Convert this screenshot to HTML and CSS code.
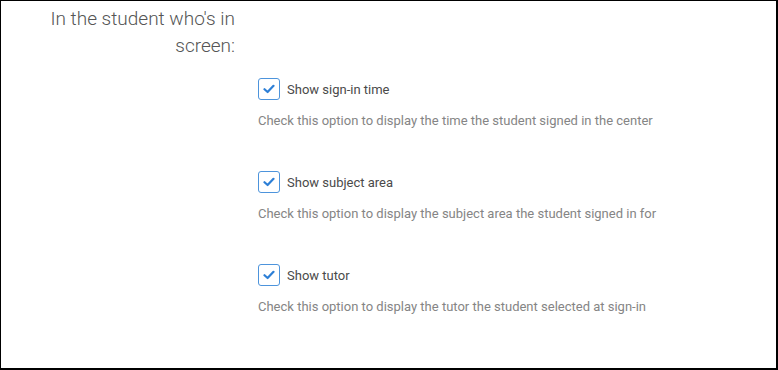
FILE: index.html
```html
<!DOCTYPE html>
<html lang="en">
<head>
    <meta charset="UTF-8">
    <title>Student display settings</title>
    <link rel="stylesheet" href="styles.css">
</head>
<body>
    <div class="settings-frame">
        <div class="settings-group">
            <h2 class="group-title">In the student who's in screen:</h2>

            <div class="option-list">
                <div class="option">
                    <label class="checkbox-container">
                        <input type="checkbox" checked>
                        <span class="checkbox-custom">
                            <svg viewBox="0 0 12 10" width="12" height="10"><path d="M1.5 5.2 L4.6 8 L10.5 1.8" /></svg>
                        </span>
                        Show sign-in time
                    </label>
                    <p class="option-help">Check this option to display the time the student signed in the center</p>
                </div>

                <div class="option">
                    <label class="checkbox-container">
                        <input type="checkbox" checked>
                        <span class="checkbox-custom">
                            <svg viewBox="0 0 12 10" width="12" height="10"><path d="M1.5 5.2 L4.6 8 L10.5 1.8" /></svg>
                        </span>
                        Show subject area
                    </label>
                    <p class="option-help">Check this option to display the subject area the student signed in for</p>
                </div>

                <div class="option">
                    <label class="checkbox-container">
                        <input type="checkbox" checked>
                        <span class="checkbox-custom">
                            <svg viewBox="0 0 12 10" width="12" height="10"><path d="M1.5 5.2 L4.6 8 L10.5 1.8" /></svg>
                        </span>
                        Show tutor
                    </label>
                    <p class="option-help">Check this option to display the tutor the student selected at sign-in</p>
                </div>
            </div>
        </div>
    </div>
</body>
</html>
```
FILE: styles.css
```css
/* Global Styles */
body {
    margin: 0;
    padding: 0;
    background-color: #ffffff;
    font-family: Roboto, "Liberation Sans", Arial, sans-serif;
}

/* Frame */
.settings-frame {
    width: 778px;
    height: 370px;
    box-sizing: border-box;
    border: 1px solid #000000;
    border-right-width: 2px;
    border-bottom-width: 2px;
    background-color: #ffffff;
}

/* Group: title on the left, options below on the right */
.settings-group {
    display: grid;
    grid-template-columns: 234px 1fr;
    column-gap: 23px;
    padding-top: 4px;
}

.group-title {
    grid-column: 1;
    grid-row: 1;
    margin: 0;
    font-size: 19px;
    font-weight: 300;
    line-height: 27px;
    color: #555555;
    text-align: right;
}

.option-list {
    grid-column: 2;
    grid-row: 2;
    display: flex;
    flex-direction: column;
    gap: 41px;
    margin-top: 19px;
}

/* Custom Checkbox */
.checkbox-container {
    display: flex;
    align-items: center;
    gap: 7px;
    font-size: 13px;
    color: #4a4a4a;
    cursor: pointer;
}

.checkbox-container input {
    display: none;
}

.checkbox-custom {
    width: 20px;
    height: 20px;
    border: 1px solid #4d94dc;
    border-radius: 3px;
    display: flex;
    justify-content: center;
    align-items: center;
}

.checkbox-custom svg path {
    fill: none;
    stroke: #2d7fd6;
    stroke-width: 2.2;
    stroke-linecap: round;
    stroke-linejoin: round;
}

.option-help {
    margin: 12px 0 0;
    font-size: 13px;
    line-height: 18px;
    color: #858585;
}
```
